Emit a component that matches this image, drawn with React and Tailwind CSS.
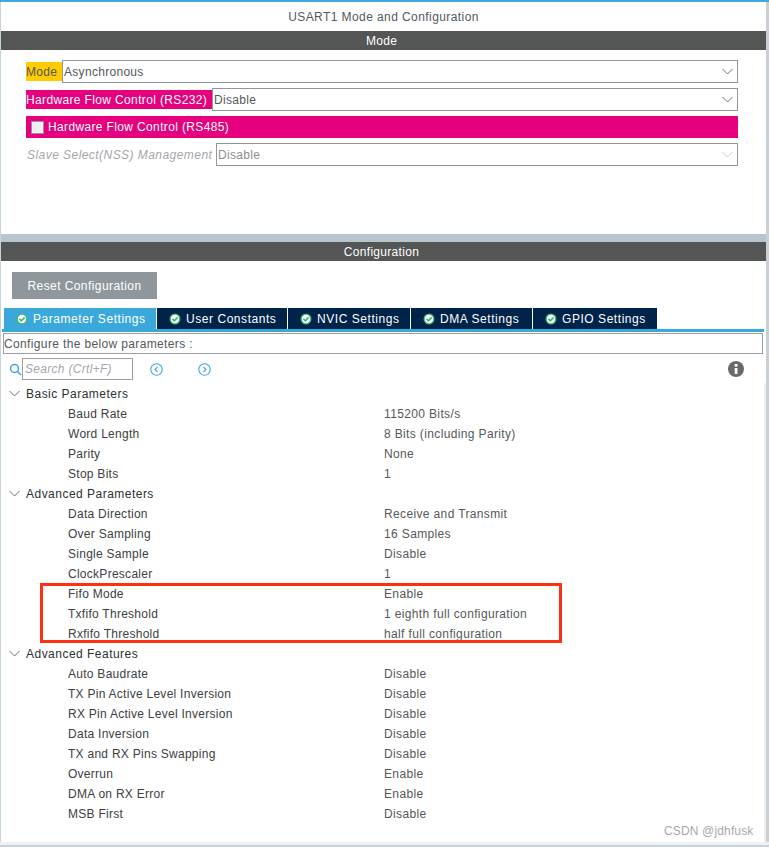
import React from "react";

const sections = [
  {
    title: "Basic Parameters",
    rows: [
      ["Baud Rate", "115200 Bits/s"],
      ["Word Length", "8 Bits (including Parity)"],
      ["Parity", "None"],
      ["Stop Bits", "1"],
    ],
  },
  {
    title: "Advanced Parameters",
    rows: [
      ["Data Direction", "Receive and Transmit"],
      ["Over Sampling", "16 Samples"],
      ["Single Sample", "Disable"],
      ["ClockPrescaler", "1"],
      ["Fifo Mode", "Enable"],
      ["Txfifo Threshold", "1 eighth full configuration"],
      ["Rxfifo Threshold", "half full configuration"],
    ],
  },
  {
    title: "Advanced Features",
    rows: [
      ["Auto Baudrate", "Disable"],
      ["TX Pin Active Level Inversion", "Disable"],
      ["RX Pin Active Level Inversion", "Disable"],
      ["Data Inversion", "Disable"],
      ["TX and RX Pins Swapping", "Disable"],
      ["Overrun", "Enable"],
      ["DMA on RX Error", "Enable"],
      ["MSB First", "Disable"],
    ],
  },
];

const tabs = [
  { label: "Parameter Settings", width: "w-[152px]", active: true },
  { label: "User Constants", width: "w-[130px]" },
  { label: "NVIC Settings", width: "w-[122px]" },
  { label: "DMA Settings", width: "w-[121px]" },
  { label: "GPIO Settings", width: "w-[124px]" },
];

function Chevron({ color = "#6b7378", className = "" }) {
  return (
    <svg width="11" height="7" viewBox="0 0 11 7" fill="none" className={className}>
      <path d="M0.5 1 L5.5 6 L10.5 1" stroke={color} strokeWidth="1" />
    </svg>
  );
}

function Check() {
  return (
    <svg width="12" height="12" viewBox="0 0 12 12" className="shrink-0">
      <circle cx="6" cy="6" r="5.5" fill="#3fb573" />
      <circle cx="6" cy="6" r="4.2" fill="#ffffff" />
      <path d="M3.4 5.9 L5.3 7.8 L8.7 4.4" fill="none" stroke="#3fb573" strokeWidth="1.7" />
    </svg>
  );
}

function Select({ value, disabled, className = "" }) {
  return (
    <div className={`flex h-[23px] flex-1 items-center justify-between border border-[#8f979c] bg-white pl-px pr-[4px] ${className}`}>
      <span className={disabled ? "text-[#8a8f93]" : "text-[#54585a]"}>{value}</span>
      <Chevron color={disabled ? "#c8cccf" : "#6b7378"} />
    </div>
  );
}

function Bar({ children }) {
  return (
    <div className="flex h-[19px] items-center justify-center bg-[#545655] pr-[4px] text-white">{children}</div>
  );
}

export default function App() {
  return (
    <div className="relative h-[847px] w-[769px] overflow-hidden bg-white font-['Liberation_Sans',Arial,sans-serif] text-[12px] tracking-[0.3px] text-[#54585a]">
      <div className="h-[2px] bg-[#3fa9d9]" />
      <div className="flex h-[845px]">
        <div className="w-px bg-[#c5d3dc]" />
        <div className="flex w-[765px] flex-col">
          {/* Mode */}
          <div className="flex h-[29px] items-center justify-center tracking-[0.42px]">USART1 Mode and Configuration</div>
          <Bar>Mode</Bar>
          <div className="flex h-[184px] flex-col pl-[25px] pr-[28px] pt-[10px]">
            <div className="flex items-center">
              <span className="flex h-[19px] w-[36px] items-center bg-[#ffcc00]">Mode</span>
              <Select value="Asynchronous" />
            </div>
            <div className="mt-[5px] flex items-center">
              <span className="flex h-[19px] w-[186px] items-center bg-[#e6007e] tracking-[0.36px] text-white">Hardware Flow Control (RS232)</span>
              <Select value="Disable" />
            </div>
            <div className="mt-[5px] flex h-[22px] items-center gap-[4px] bg-[#e6007e] pl-[5px] tracking-[0.36px] text-white">
              <span className="h-[13px] w-[13px] border border-[#8f979c] bg-[#eef0f1]" />
              Hardware Flow Control (RS485)
            </div>
            <div className="mt-[5px] flex items-center">
              <span className="w-[190px] pl-px italic tracking-[0.45px] text-[#a3a7aa]">Slave Select(NSS) Management</span>
              <Select value="Disable" disabled />
            </div>
          </div>
          <div className="h-[8px] bg-[#b9c5cc]" />

          {/* Configuration */}
          <Bar>Configuration</Bar>
          <div className="pl-[11px] pt-[11px]">
            <button className="h-[27px] w-[145px] bg-[#90979c] tracking-[0.42px] text-white">Reset Configuration</button>
          </div>
          <div className="mt-[9px] flex h-[21px] pl-[3px]">
            {tabs.map((tab) => (
              <div
                key={tab.label}
                className={`mr-px flex items-center gap-[5px] pl-[12px] tracking-[0.55px] ${tab.width} ${tab.active ? "bg-[#3ba8dc] text-white" : "bg-[#002349] text-white"}`}
              >
                <Check />
                {tab.label}
              </div>
            ))}
          </div>
          <div className="ml-px h-[3px] w-[762px] bg-[#3ba8dc]" />
          <div className="ml-[2px] mt-px flex h-[21px] w-[760px] items-center border border-[#9aa0a5] tracking-[0.36px]">
            Configure the below parameters :
          </div>

          {/* Search row */}
          <div className="mt-[4px] flex h-[22px] items-center pl-[8px] pr-[22px]">
            <svg width="13" height="13" viewBox="0 0 13 13" fill="none" className="shrink-0">
              <circle cx="5.5" cy="5.5" r="4" stroke="#3ba8dc" strokeWidth="1.5" />
              <path d="M8.5 8.5 L12 12" stroke="#3ba8dc" strokeWidth="1.6" />
            </svg>
            <div className="flex h-[22px] w-[111px] items-center border border-[#9aa0a5] pl-[2px] italic text-[#a3a7aa]">Search (Crtl+F)</div>
            <svg width="13" height="13" viewBox="0 0 13 13" fill="none" className="ml-[17px] shrink-0">
              <circle cx="6.5" cy="6.5" r="5.7" stroke="#3ba8dc" strokeWidth="1.1" />
              <path d="M7.6 3.8 L5 6.5 L7.6 9.2" stroke="#3ba8dc" strokeWidth="1.1" />
            </svg>
            <svg width="13" height="13" viewBox="0 0 13 13" fill="none" className="ml-[35px] shrink-0">
              <circle cx="6.5" cy="6.5" r="5.7" stroke="#3ba8dc" strokeWidth="1.1" />
              <path d="M5.4 3.8 L8 6.5 L5.4 9.2" stroke="#3ba8dc" strokeWidth="1.1" />
            </svg>
            <svg width="16" height="16" viewBox="0 0 16 16" className="ml-auto shrink-0">
              <circle cx="8" cy="8" r="8" fill="#666a6d" />
              <rect x="6.7" y="7" width="2.8" height="6" fill="#fff" />
              <rect x="6.7" y="3" width="2.8" height="2.6" fill="#fff" />
            </svg>
          </div>

          {/* Parameter tree */}
          <div className="mt-[3px] flex-1 border-r-[2px] border-[#f0f0f0]">
            {sections.map((section) => (
              <div key={section.title}>
                <div className="flex h-[20px] items-center pt-[2px] tracking-[0.48px] text-[#2c2f31]">
                  <Chevron className="-mt-[2px] ml-[8px] mr-[6px]" />
                  {section.title}
                </div>
                {section.rows.map(([name, value]) => (
                  <div key={name} className="flex h-[20px] items-center pt-[2px]">
                    <span className="w-[383px] pl-[67px] tracking-[0.27px] text-[#3c4042]">{name}</span>
                    <span className="tracking-[0.36px]">{value}</span>
                  </div>
                ))}
              </div>
            ))}
          </div>
        </div>
        <div className="w-[3px] bg-[#c8d0d5]" />
      </div>

      {/* Red annotation drawn over the screenshot */}
      <div className="pointer-events-none absolute left-[40px] top-[583px] h-[60px] w-[522px] border-[3px] border-[#ff2f12]" />
      <span className="absolute left-[664px] top-[822px] text-[12px] tracking-[0.15px] text-[#a8a8a8]">CSDN @jdhfusk</span>
      <div className="absolute bottom-[2px] left-0 h-[3px] w-full bg-[#f0f0f0]" />
      <div className="absolute bottom-0 left-0 h-[2px] w-full bg-[#c5d3dc]" />
    </div>
  );
}
